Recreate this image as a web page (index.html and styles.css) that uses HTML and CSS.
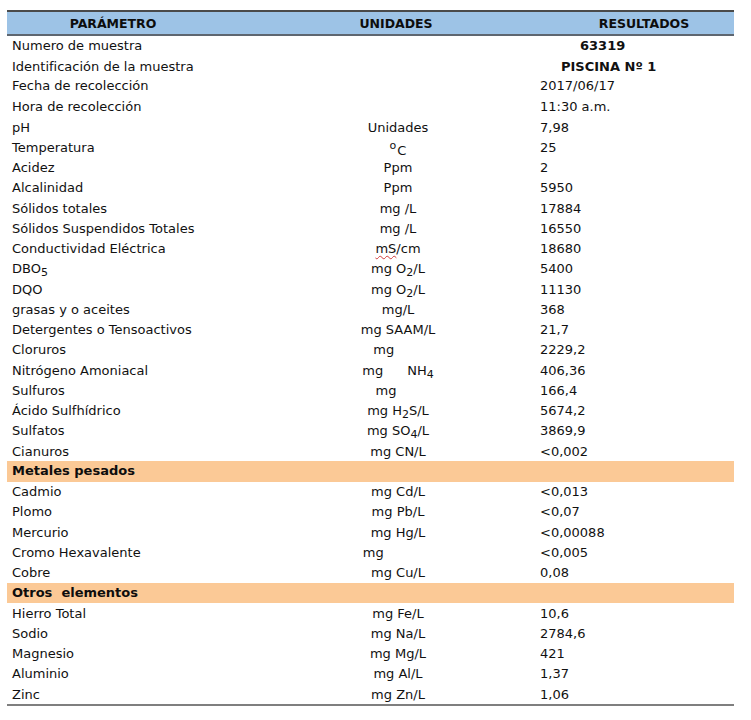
FILE: index.html
```html
<!DOCTYPE html>
<html lang="es">
<head>
<meta charset="utf-8">
<title>Resultados</title>
<link rel="stylesheet" href="styles.css">
</head>
<body>
<div class="sheet">
  <div class="head">
    <div class="h1">PARÁMETRO</div>
    <div class="h2">UNIDADES</div>
    <div class="h3">RESULTADOS</div>
    <div></div>
  </div>

  <div class="row r1"><div class="p">Numero de muestra</div><div class="u"></div><div class="v bold num">63319</div></div>
  <div class="row r2"><div class="p">Identificación de la muestra</div><div class="u"></div><div class="v bold pis">PISCINA Nº 1</div></div>
  <div class="row r3"><div class="p">Fecha de recolección</div><div class="u"></div><div class="v">2017/06/17</div></div>
  <div class="row r4"><div class="p">Hora de recolección</div><div class="u"></div><div class="v">11:30 a.m.</div></div>
  <div class="row"><div class="p">pH</div><div class="u">Unidades</div><div class="v">7,98</div></div>
  <div class="row"><div class="p">Temperatura</div><div class="u"><span class="deg">o</span><span class="cel">C</span></div><div class="v">25</div></div>
  <div class="row"><div class="p">Acidez</div><div class="u">Ppm</div><div class="v">2</div></div>
  <div class="row"><div class="p">Alcalinidad</div><div class="u">Ppm</div><div class="v">5950</div></div>
  <div class="row"><div class="p">Sólidos totales</div><div class="u">mg /L</div><div class="v">17884</div></div>
  <div class="row"><div class="p">Sólidos Suspendidos Totales</div><div class="u">mg /L</div><div class="v">16550</div></div>
  <div class="row"><div class="p">Conductividad Eléctrica</div><div class="u"><span class="spell">mS</span>/cm</div><div class="v">18680</div></div>
  <div class="row"><div class="p">DBO<span class="sub">5</span></div><div class="u">mg O<span class="sub">2</span>/L</div><div class="v">5400</div></div>
  <div class="row"><div class="p">DQO</div><div class="u">mg O<span class="sub">2</span>/L</div><div class="v">11130</div></div>
  <div class="row"><div class="p">grasas y o aceites</div><div class="u">mg/L</div><div class="v">368</div></div>
  <div class="row"><div class="p">Detergentes o Tensoactivos</div><div class="u">mg SAAM/L</div><div class="v">21,7</div></div>
  <div class="row"><div class="p">Cloruros</div><div class="u">mg<span class="ghost"> Cl/L</span></div><div class="v">2229,2</div></div>
  <div class="row"><div class="p">Nitrógeno Amoniacal</div><div class="u">mg<span class="gap"></span>NH<span class="sub">4</span></div><div class="v">406,36</div></div>
  <div class="row"><div class="p">Sulfuros</div><div class="u">mg<span class="ghost"> S/L</span></div><div class="v">166,4</div></div>
  <div class="row"><div class="p">Ácido Sulfhídrico</div><div class="u">mg H<span class="sub">2</span>S/L</div><div class="v">5674,2</div></div>
  <div class="row"><div class="p">Sulfatos</div><div class="u">mg SO<span class="sub">4</span>/L</div><div class="v">3869,9</div></div>
  <div class="row"><div class="p">Cianuros</div><div class="u">mg CN/L</div><div class="v">&lt;0,002</div></div>

  <div class="band">Metales pesados</div>

  <div class="row"><div class="p">Cadmio</div><div class="u">mg Cd/L</div><div class="v">&lt;0,013</div></div>
  <div class="row"><div class="p">Plomo</div><div class="u">mg Pb/L</div><div class="v">&lt;0,07</div></div>
  <div class="row"><div class="p">Mercurio</div><div class="u">mg Hg/L</div><div class="v">&lt;0,00088</div></div>
  <div class="row"><div class="p">Cromo Hexavalente</div><div class="u">mg<span class="ghost"> Cr+6/L</span></div><div class="v">&lt;0,005</div></div>
  <div class="row"><div class="p">Cobre</div><div class="u">mg Cu/L</div><div class="v">0,08</div></div>

  <div class="band">Otros&nbsp; elementos</div>

  <div class="row"><div class="p">Hierro Total</div><div class="u">mg Fe/L</div><div class="v">10,6</div></div>
  <div class="row"><div class="p">Sodio</div><div class="u">mg Na/L</div><div class="v">2784,6</div></div>
  <div class="row"><div class="p">Magnesio</div><div class="u">mg Mg/L</div><div class="v">421</div></div>
  <div class="row"><div class="p">Aluminio</div><div class="u">mg Al/L</div><div class="v">1,37</div></div>
  <div class="row"><div class="p">Zinc</div><div class="u">mg Zn/L</div><div class="v">1,06</div></div>
  <div class="end"></div>
</div>
</body>
</html>
```
FILE: styles.css
```css
html, body {
  margin: 0;
  padding: 0;
  background: #ffffff;
}
body {
  font-family: "DejaVu Sans", Verdana, sans-serif;
  font-size: 13px;
  color: #111111;
}
.sheet {
  margin: 10px 0 0 7px;
  width: 727px;
}
.head {
  display: grid;
  grid-template-columns: 212px 354px 142px 1fr;
  align-items: center;
  height: 22px;
  background: #9dc3e6;
  border-top: 2px solid #4a4a4a;
  border-bottom: 2px solid #5e6670;
  font-weight: bold;
  font-size: 12.5px;
  color: #0d0d0d;
}
.head div {
  text-align: center;
}
.head .h1 { padding-top: 1px; }
.row {
  display: grid;
  grid-template-columns: 293px 196px 1fr;
  align-items: center;
  height: 20.25px;
  line-height: 15px;
  white-space: nowrap;
}
.r1 { height: 18px; }
.r2 { height: 22px; padding-top: 3px; box-sizing: border-box; }
.r3 { height: 20px; padding-bottom: 2px; box-sizing: border-box; }
.r4 { height: 21px; }
.p {
  padding-left: 5px;
}
.u {
  text-align: center;
}
.v {
  padding-left: 44px;
}
.bold {
  font-weight: bold;
}
.num { padding-left: 84px; }
.pis { padding-left: 65px; }
.sub {
  font-size: 11px;
  position: relative;
  top: 3px;
  line-height: 0;
}
.deg {
  font-size: 11px;
  position: relative;
  top: -2px;
}
.cel {
  position: relative;
  top: 4px;
  margin-left: 1px;
}
.spell {
  text-decoration: underline wavy #d23a3a;
  text-decoration-thickness: 1px;
  text-underline-offset: 2px;
}
.ghost {
  visibility: hidden;
}
.gap {
  display: inline-block;
  width: 24px;
}
.band {
  height: 20.25px;
  line-height: 20px;
  background: #fbc996;
  font-weight: bold;
  padding-left: 5px;
  color: #0d0d0d;
}
.end {
  height: 0;
  border-top: 2px solid #7f7f7f;
}
```
